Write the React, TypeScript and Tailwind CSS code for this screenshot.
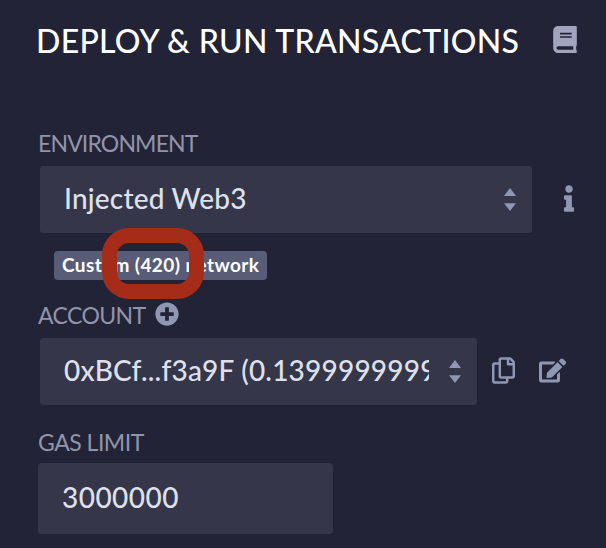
import React from "react";
import { FaBook, FaEdit, FaInfo, FaPlusCircle, FaRegCopy } from "react-icons/fa";

function SelectArrows() {
  return (
    <svg className="h-[23px] w-3 shrink-0 fill-[#8f97b3]" viewBox="0 0 12 23">
      <path d="M6 0 12 8H0zM0 15.2h12L6 23z" />
    </svg>
  );
}

function Label({ children, className }: { children: React.ReactNode; className: string }) {
  return (
    <span className={"whitespace-nowrap text-[23px] leading-[28px] text-[#9295aa] " + className}>
      {children}
    </span>
  );
}

export default function App() {
  return (
    <main className="flex h-[548px] w-[606px] flex-col overflow-hidden bg-[#222336] font-['Lato','Open_Sans',sans-serif] text-[#dfe1ea]">
      <header className="flex h-[129px] items-start pl-[36px] pt-[21px]">
        <h1 className="w-[517px] whitespace-nowrap text-[32px] font-medium leading-[40px] tracking-[0.3px] text-white">
          DEPLOY &amp; RUN TRANSACTIONS
        </h1>
        <FaBook className="mt-[5px] h-[27px] w-6 text-[#a2a3bd]" />
      </header>

      <section className="flex h-[172px] flex-col">
        <Label className="ml-[38px] tracking-[-0.85px]">ENVIRONMENT</Label>
        <div className="ml-10 mt-[9px] flex h-[67px] items-center">
          <div className="flex h-[67px] w-[492px] items-center justify-between rounded-[3px] bg-[#35364a] pl-6 pr-4">
            <span className="whitespace-nowrap pb-[3px] text-[28px] font-medium leading-9 tracking-[0.2px]">Injected Web3</span>
            <SelectArrows />
          </div>
          <FaInfo className="mb-[2px] ml-[32px] h-[27px] w-[10px] text-[#8f97b3]" />
        </div>
        <div className="relative ml-[54px] mt-[18px] flex h-[29px] w-[213px] items-center rounded-[4px] bg-[#595c76] pl-2">
          <span className="whitespace-nowrap pb-[2px] text-[19px] font-bold leading-6 tracking-[0.41px] text-white">Custom (420) network</span>
          <span className="absolute left-[48px] top-[-23px] h-[71px] w-[102px] rounded-[27px] border-[15px] border-[#a52c18]" />
        </div>
      </section>

      <section className="flex h-[127px] flex-col">
        <div className="ml-[38px] flex h-[28px] items-center">
          <Label className="w-[117px] tracking-[-0.6px]">ACCOUNT</Label>
          <FaPlusCircle className="mb-[2px] h-6 w-6 text-[#8f97b3]" />
        </div>
        <div className="ml-10 mt-[9px] flex h-[67px] items-center">
          <div className="flex h-[67px] w-[437px] items-center justify-between rounded-[3px] bg-[#35364a] pl-6 pr-4">
            <span className="w-[365px] overflow-hidden whitespace-nowrap pb-[3px] text-[28px] font-medium leading-9 tracking-[0.2px]">
              0xBCf...f3a9F (0.1399999999999
            </span>
            <SelectArrows />
          </div>
          <FaRegCopy className="mb-[2px] ml-[15px] h-[27px] w-[23px] text-[#8f97b3]" />
          <FaEdit className="mb-[2px] ml-[24px] h-[27px] w-[27px] text-[#8f97b3]" />
        </div>
      </section>

      <section className="flex flex-col pl-[38px]">
        <Label className="tracking-[-0.5px]">GAS LIMIT</Label>
        <div className="mt-[7px] flex h-[71px] w-[295px] items-center rounded-[4px] bg-[#35364a] pl-6">
          <span className="pb-[3px] text-[28px] font-medium leading-9 tracking-[0.45px]">3000000</span>
        </div>
      </section>
    </main>
  );
}
